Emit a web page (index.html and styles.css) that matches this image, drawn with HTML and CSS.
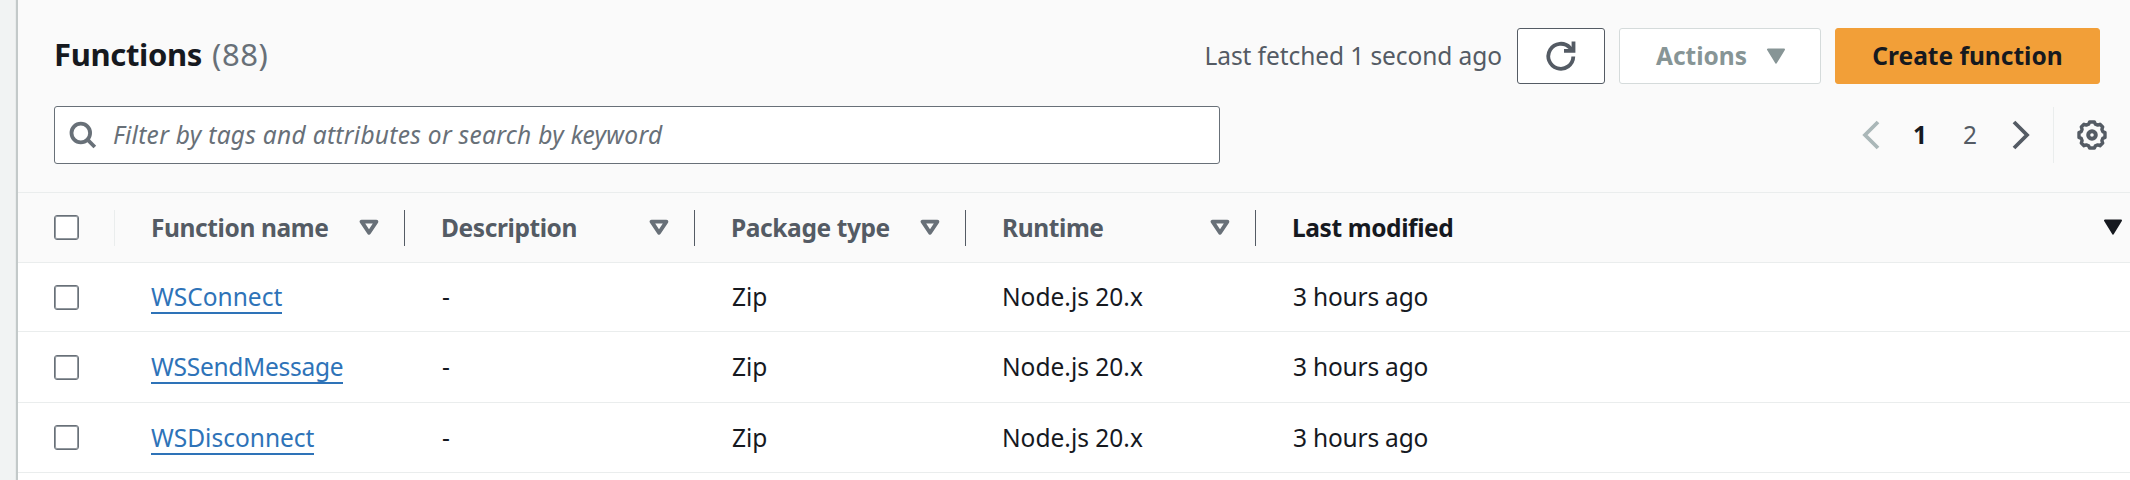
FILE: index.html
```html
<!DOCTYPE html>
<html lang="en">
<head>
<meta charset="utf-8">
<title>Functions</title>
<link rel="stylesheet" href="styles.css">
</head>
<body>
<svg class="defs" width="0" height="0">
  <symbol id="sort" viewBox="0 0 20 17"><path d="M2.6 2.6h14.8L10 13.8z" fill="none" stroke="currentColor" stroke-width="3.9" stroke-linejoin="round"/></symbol>
  <symbol id="down" viewBox="0 0 20 17"><path d="M2 1.6h16L10 14.6z" fill="currentColor" stroke="currentColor" stroke-width="2" stroke-linejoin="round"/></symbol>
</svg>
<main class="panel">
  <header class="toolbar">
    <div class="title-row">
      <h1 class="title"><span class="title-name">Functions</span><span class="count">(88)</span></h1>
      <div class="actions">
        <span class="fetched">Last fetched 1 second ago</span>
        <button class="btn refresh" aria-label="Refresh"><svg width="30" height="30" viewBox="0 0 30 30" fill="none" stroke="currentColor" stroke-width="3.8"><path d="M27.3 15.5A12.5 12.5 0 1 1 24 6.8l2.5 2.7"/><path d="M27.5 0.5v9.3h-9.5"/></svg></button>
        <button class="btn menu"><span>Actions</span><svg class="tri"><use href="#down"/></svg></button>
        <button class="btn primary"><span>Create function</span></button>
      </div>
    </div>
    <div class="filter-row">
      <label class="search">
        <svg width="28" height="28" viewBox="0 0 28 28" fill="none" stroke="currentColor" stroke-width="3.8"><circle cx="11.8" cy="12" r="9.3"/><path d="M18.5 18.7l7.3 7.3"/></svg>
        <span class="placeholder">Filter by tags and attributes or search by keyword</span>
      </label>
      <nav class="pager">
        <svg class="prev" width="18" height="30" viewBox="0 0 18 30"><path d="M16 2L3 15l13 13"/></svg>
        <span class="page current">1</span>
        <span class="page">2</span>
        <svg class="next" width="18" height="30" viewBox="0 0 18 30"><path d="M2 2l13 13L2 28"/></svg>
        <span class="rule"></span>
        <svg class="gear" width="30" height="30" viewBox="0 0 30 30" fill="none" stroke="currentColor" stroke-width="4"><circle cx="15" cy="15" r="3.8"/><path stroke-width="3.4" stroke-linejoin="round" d="M12.6 2h4.8l1 2.2 2.3.9 2.3-.8 2.7 2.7-.8 2.3.9 2.3 2.2 1v4.8l-2.2 1-.9 2.3.8 2.3-2.7 2.7-2.3-.8-2.3.9-1 2.2h-4.8l-1-2.2-2.3-.9-2.3.8L4.3 23l.8-2.3-.9-2.3L2 17.4v-4.8l2.2-1 .9-2.3L4.3 7 7 4.3l2.3.8 2.3-.9z"/></svg>
      </nav>
    </div>
  </header>
  <section class="table">
    <div class="row head">
      <div class="cell select"><i class="box"></i></div>
      <div class="cell"><span>Function name</span><svg class="tri"><use href="#sort"/></svg></div>
      <div class="cell"><span>Description</span><svg class="tri"><use href="#sort"/></svg></div>
      <div class="cell"><span>Package type</span><svg class="tri"><use href="#sort"/></svg></div>
      <div class="cell"><span>Runtime</span><svg class="tri"><use href="#sort"/></svg></div>
      <div class="cell sorted"><span>Last modified</span><svg class="tri"><use href="#down"/></svg></div>
    </div>
    <div class="row first">
      <div class="cell select"><i class="box"></i></div>
      <div class="cell"><a class="link">WSConnect</a></div>
      <div class="cell desc">-</div><div class="cell zip">Zip</div><div class="cell">Node.js 20.x</div><div class="cell mod">3 hours ago</div>
    </div>
    <div class="row second">
      <div class="cell select"><i class="box"></i></div>
      <div class="cell"><a class="link tight">WSSendMessage</a></div>
      <div class="cell desc">-</div><div class="cell zip">Zip</div><div class="cell">Node.js 20.x</div><div class="cell mod">3 hours ago</div>
    </div>
    <div class="row">
      <div class="cell select"><i class="box"></i></div>
      <div class="cell"><a class="link">WSDisconnect</a></div>
      <div class="cell desc">-</div><div class="cell zip">Zip</div><div class="cell">Node.js 20.x</div><div class="cell mod">3 hours ago</div>
    </div>
  </section>
</main>
</body>
</html>
```
FILE: styles.css
```css
* { box-sizing: border-box; }
body {
  margin: 0;
  height: 480px;
  overflow: hidden;
  padding-left: 18px;
  background: #f1f3f3;
  font: 24.5px/36px "Noto Sans", sans-serif;
  color: #16191f;
}
.defs { display: block; position: absolute; }
.panel { height: 480px; background: #fff; box-shadow: -1px 0 1px 1px #c3c9c9; }
.toolbar { height: 193px; padding: 28px 30px 0 36px; background: #fafafa; border-bottom: 1px solid #eaeded; }
.title-row { display: flex; justify-content: space-between; height: 56px; }
.title { display: flex; gap: 10px; margin: 0; font-size: 31px; line-height: 52px; }
.title-name { letter-spacing: -0.35px; }
.count { font-weight: 400; color: #687078; letter-spacing: 0.6px; }
.actions { display: flex; align-items: center; }
.fetched { margin-right: 15px; color: #545b64; line-height: 54px; letter-spacing: -0.08px; }
.btn {
  display: flex; align-items: center; justify-content: center;
  height: 56px; padding: 0; border: 1px solid #545b64; border-radius: 3px;
  background: #fff; color: #545b64; font: 700 24.5px/54px "Noto Sans", sans-serif;
}
.refresh { width: 88px; margin-right: 14px; }
.refresh svg { margin-right: 1px; }
.menu { width: 202px; margin-right: 14px; padding-left: 2px; gap: 19px; border-color: #d5dbdb; color: #879596; }
.primary { width: 265px; border-color: #f29f38; background: #f29f38; color: #16191f; }
.tri { width: 20px; height: 17px; flex: none; }
.filter-row { display: flex; justify-content: space-between; margin-top: 22px; }
.search {
  display: flex; align-items: center; width: 1166px; height: 58px; padding-left: 14px;
  border: 1px solid #687078; border-radius: 3px; background: #fff; color: #687078;
}
.placeholder { margin-left: 16px; font-style: italic; letter-spacing: 0.29px; }
.pager { display: flex; align-items: center; height: 58px; margin-right: -7px; color: #545b64; }
.prev, .next { fill: none; stroke: currentColor; stroke-width: 3.8; }
.prev { color: #aab7b8; }
.page { width: 16px; text-align: center; }
.prev + .page { margin-left: 32px; }
.page + .page { margin-left: 34px; }
.current { font-weight: 700; color: #16191f; }
.next { margin-left: 34px; }
.rule { width: 1px; height: 56px; margin: 0 23px; background: #eaeded; }
.row {
  display: grid; grid-template-columns: 97px 290px 290px 271px 290px 1fr;
  height: 70px; border-bottom: 1px solid #eaeded;
}
.first { height: 69px; }
.second { height: 71px; }
.cell { display: flex; align-items: center; padding-left: 36px; }
.box {
  width: 25px; height: 25px; border: 1px solid #687078; border-radius: 3px;
  background: #fff; box-shadow: inset 0 0 0 1px #92989e;
}
.head { background: #fafafa; font-weight: 700; color: #545b64; letter-spacing: -0.4px; }
.head .cell { position: relative; justify-content: space-between; padding-right: 26px; }
.head .cell:not(.sorted)::after { content: ""; position: absolute; right: 0; top: 17px; width: 1px; height: 36px; background: #545b64; }
.head .select::after { background: #eaeded !important; }
.head .cell.sorted { padding-right: 7px; color: #16191f; }
.head .tri { color: #687078; }
.head .sorted .tri { color: #16191f; }
.desc, .zip { padding-left: 37px; }
.mod { padding-left: 37px; letter-spacing: -0.2px; }
.link { padding-top: 2px; color: #2e73b8; line-height: 30px; border-bottom: 2px solid #2e73b8; }
.tight { letter-spacing: -0.27px; }
```
